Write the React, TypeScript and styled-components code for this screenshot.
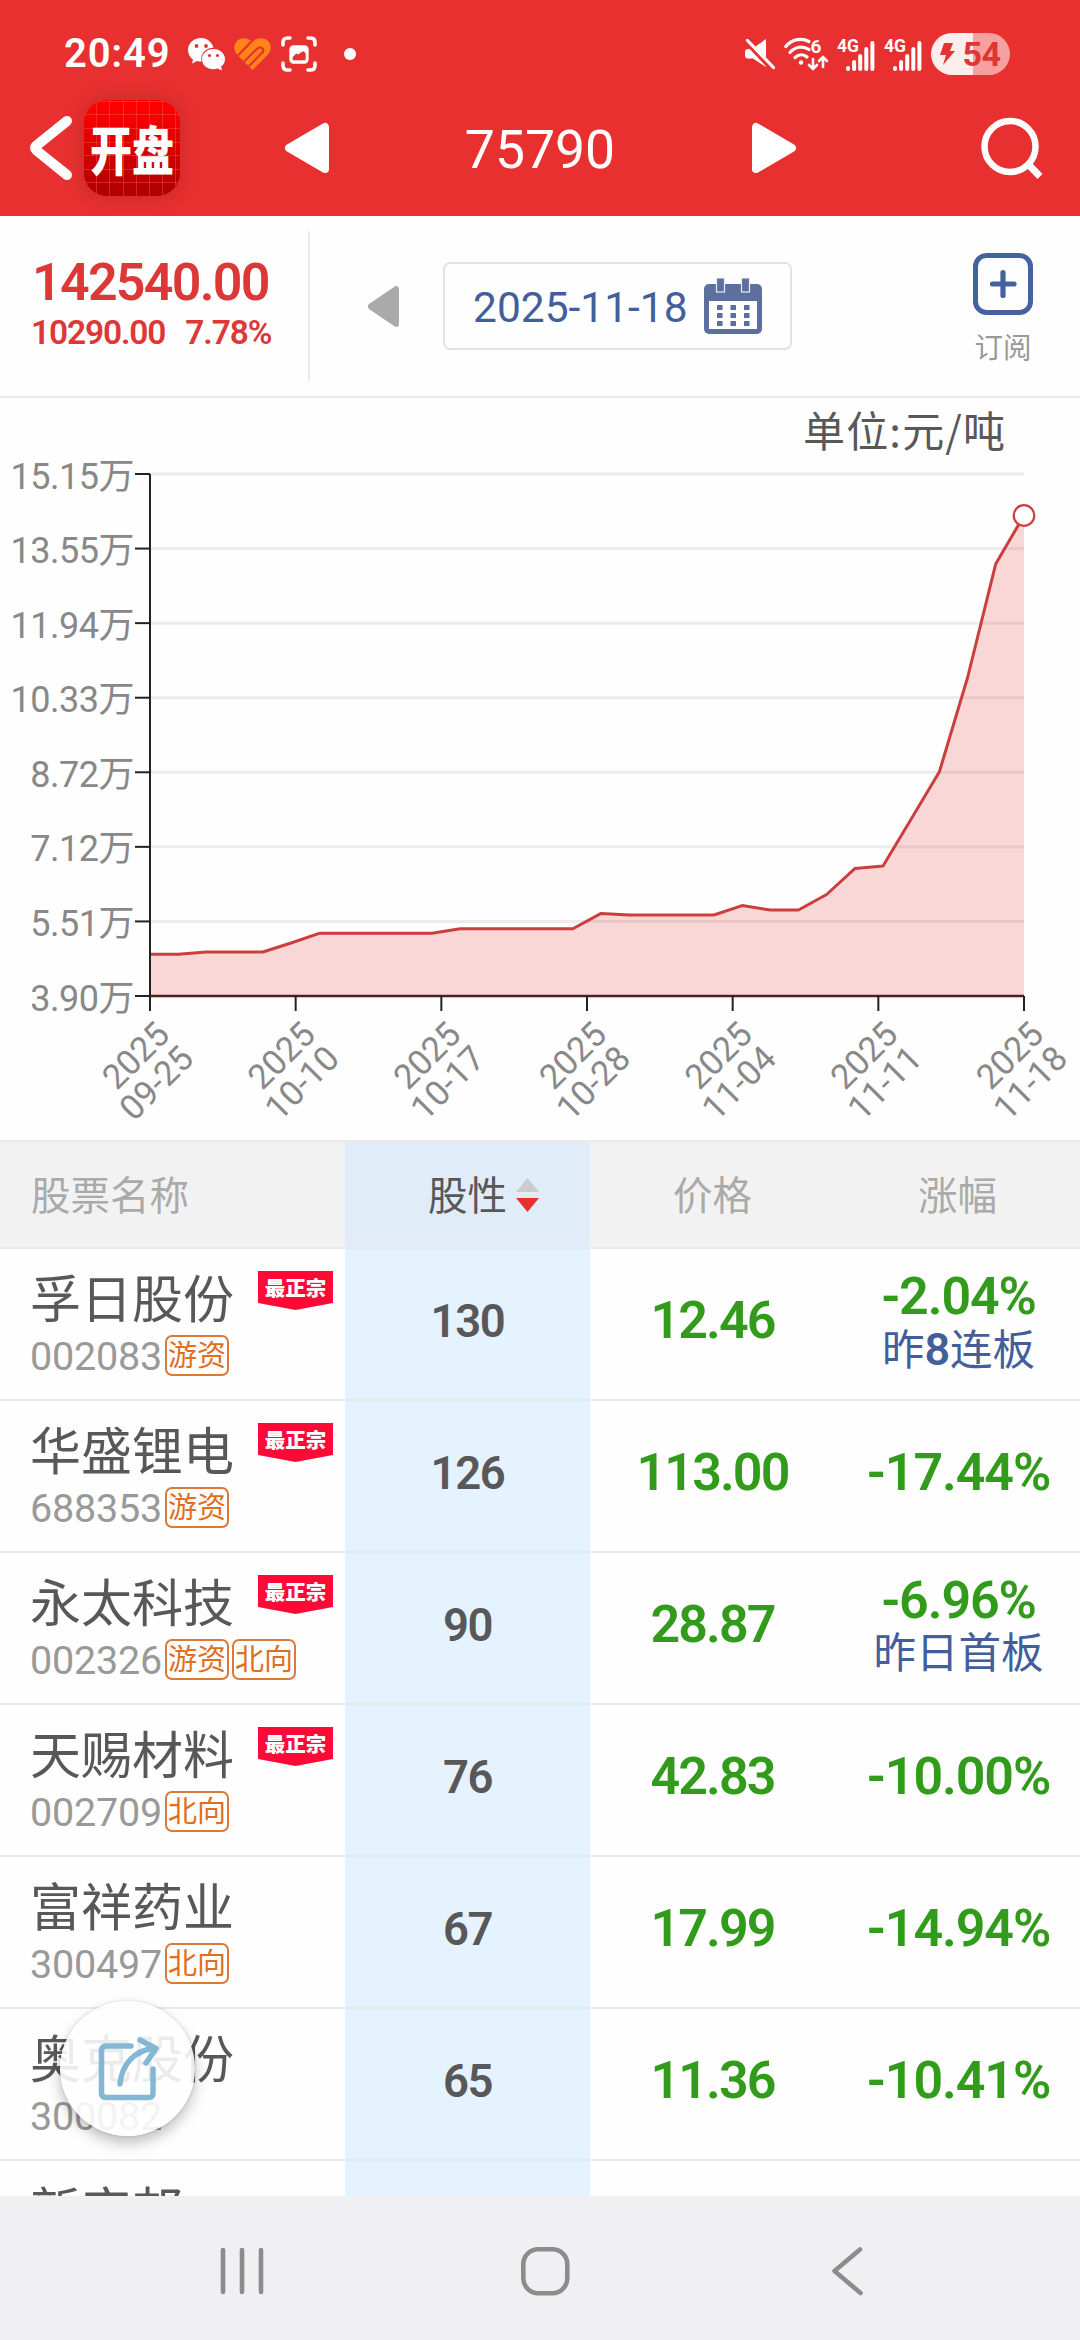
import React from "react";
import styled, { createGlobalStyle } from "styled-components";

const GlobalStyle = createGlobalStyle`
  * { box-sizing: border-box; }
  body {
    margin: 0;
    background: #fff;
    font-family: Roboto, "Noto Sans CJK SC", sans-serif;
  }
  svg { flex: none; overflow: visible; }
`;

const Screen = styled.div`
  position: relative;
  width: 1080px;
  height: 2340px;
  display: flex;
  flex-direction: column;
  overflow: hidden;
  background: #fefefe;
  color: #585858;
`;

const Header = styled.header`
  height: 216px;
  flex: none;
  background: #e83030;
  color: #fff;
`;

const StatusBar = styled.div`
  height: 96px;
  padding: 11px 70px 0 64px;
  display: flex;
  align-items: center;
  justify-content: space-between;
`;

const StatusGroup = styled.div<{ $gap: number }>`
  display: flex;
  align-items: center;
  gap: ${(p) => p.$gap}px;
`;

const Clock = styled.span`
  width: 107px;
  margin-right: 7px;
  font-size: 40px;
  font-weight: 600;
  line-height: 44px;
  letter-spacing: 0.8px;
`;

const Dot = styled.i`
  width: 12px;
  height: 12px;
  margin-left: 18px;
  border-radius: 50%;
  background: #fff;
`;

const Battery = styled.div`
  width: 79px;
  height: 42px;
  border-radius: 21px;
  display: flex;
  align-items: center;
  justify-content: center;
  gap: 7px;
  background: linear-gradient(90deg, #fdeeee 0 42px, #f6a09f 42px);
  color: #e03535;
  font-size: 34px;
  font-weight: 700;
  line-height: 42px;
  letter-spacing: -0.5px;
`;

const TitleBar = styled.div`
  height: 120px;
  padding: 0 36px 17px 28px;
  display: flex;
  align-items: center;
  justify-content: space-between;
`;

const TitleLeft = styled.div`
  width: 256px;
  display: flex;
  align-items: center;
  gap: 10px;
`;

const AppLogo = styled.div`
  width: 96px;
  height: 96px;
  border-radius: 23px;
  display: flex;
  align-items: center;
  justify-content: center;
  box-shadow: 0 0 12px 6px rgba(150, 30, 30, 0.22);
  background:
    repeating-linear-gradient(90deg, transparent 0 12.2px, rgba(255, 110, 110, 0.35) 12.2px 13.2px),
    repeating-linear-gradient(0deg, transparent 0 12.6px, rgba(255, 110, 110, 0.35) 12.6px 13.6px),
    linear-gradient(#ff0000 8%, #b40000 92%);
`;

const LogoText = styled.span`
  font-family: "Noto Sans CJK SC", sans-serif;
  font-weight: 900;
  font-size: 42px;
  line-height: 50px;
  transform: scaleY(1.26);
`;

const TitleNav = styled.div`
  display: flex;
  align-items: center;
  width: 511px;
  margin-left: -27px;
  justify-content: space-between;
`;

const Title = styled.h1`
  margin: 0;
  padding-top: 5px;
  font-size: 53.5px;
  font-weight: 400;
  line-height: 64px;
`;

const TitleRight = styled.div`
  width: 221px;
  display: flex;
  justify-content: flex-end;
`;

const Summary = styled.section`
  height: 182px;
  flex: none;
  display: flex;
  padding: 15px 0;
  border-bottom: 2px solid #eaeaea;
`;

const Quote = styled.div`
  width: 310px;
  height: 150px;
  padding: 23px 0 0 32px;
  border-right: 2px solid #eaeaea;
  color: #dc3838;
  font-weight: 600;
  white-space: nowrap;
`;

const QuotePrice = styled.div`
  font-size: 52px;
  line-height: 58px;
  letter-spacing: -1.75px;
`;

const QuoteChange = styled.div`
  display: flex;
  gap: 20px;
  margin-top: 1px;
  margin-left: -1px;
  font-size: 33.5px;
  line-height: 40px;
  letter-spacing: -1.15px;
`;

const DatePicker = styled.div`
  display: flex;
  align-items: center;
  flex: 1;
  padding-left: 58px;
  gap: 44px;
`;

const DateBox = styled.div`
  width: 349px;
  height: 88px;
  padding: 4px 27px 0 28px;
  border: 2px solid #e2e2e2;
  border-radius: 7px;
  display: flex;
  align-items: center;
  justify-content: space-between;
  color: #435f9b;
  font-size: 42.5px;
  line-height: 50px;
  svg { margin-top: -5px; }
`;

const Subscribe = styled.div`
  width: 154px;
  padding-top: 22px;
  display: flex;
  flex-direction: column;
  align-items: center;
  color: #999;
  font-size: 28.5px;
  line-height: 34px;
  gap: 17px;
`;

const ChartPanel = styled.section`
  height: 742px;
  flex: none;
  svg { display: block; }
`;

const axisFont = { fontFamily: 'Roboto, "Noto Sans CJK SC", sans-serif', fill: "#888" };

const cols = "345px 245px 245px 245px";

const TableHead = styled.div`
  height: 109px;
  flex: none;
  display: grid;
  grid-template-columns: ${cols};
  border-top: 2px solid #eaeaea;
  border-bottom: 2px solid #e8eaeb;
  background: #f2f2f2;
  color: #aaa;
  font-size: 39.5px;
  line-height: 50px;
`;

const HeadCell = styled.div<{ $active?: boolean; $left?: boolean }>`
  position: relative;
  display: flex;
  align-items: center;
  padding-top: 4px;
  padding-left: ${(p) => (p.$left ? 31 : 0)}px;
  justify-content: ${(p) => (p.$left ? "flex-start" : "center")};
  background: ${(p) => (p.$active ? "#e0ecf8" : "transparent")};
  color: ${(p) => (p.$active ? "#585858" : "inherit")};
`;

const SortMark = styled.svg`
  position: absolute;
  left: 171px;
  top: 36px;
`;

const TableBody = styled.div`
  flex: 1;
  min-height: 0;
  overflow: hidden;
`;

const Row = styled.div`
  height: 152px;
  display: grid;
  grid-template-columns: ${cols};
  border-bottom: 2px solid #e8eaeb;
`;

const StockCell = styled.div`
  position: relative;
  padding: 20px 0 0 30px;
`;

const StockName = styled.div`
  font-size: 51px;
  line-height: 64px;
  white-space: nowrap;
`;

const StockMeta = styled.div`
  height: 42px;
  margin-top: 1px;
  display: flex;
  align-items: center;
  gap: 3px;
`;

const Code = styled.span`
  width: 132px;
  padding-top: 3px;
  color: #999;
  font-size: 39.5px;
  line-height: 42px;
  letter-spacing: -0.2px;
`;

const Tag = styled.span`
  width: 64px;
  height: 41px;
  border: 2px solid #d97a38;
  border-radius: 7px;
  color: #df6f1e;
  font-size: 29px;
  line-height: 38px;
  text-align: center;
  white-space: nowrap;
`;

const Ribbon = styled.span`
  position: absolute;
  left: 258px;
  top: 22px;
  width: 75px;
  height: 39px;
  background: #ff0a37;
  clip-path: polygon(0 0, 100% 0, 100% 82%, 50% 100%, 0 82%);
  color: #fff;
  font-size: 20.5px;
  font-weight: 900;
  line-height: 37px;
  text-align: center;
`;

const Score = styled.div`
  display: flex;
  align-items: center;
  justify-content: center;
  padding-bottom: 6px;
  background: #e5f2ff;
  font-size: 45.5px;
  font-weight: 600;
  letter-spacing: -1.4px;
`;

const Value = styled.div<{ $tight?: boolean }>`
  display: flex;
  flex-direction: column;
  align-items: center;
  justify-content: center;
  padding-bottom: 6px;
  color: #329b1c;
  font-size: 52px;
  font-weight: 600;
  line-height: 58px;
  letter-spacing: ${(p) => (p.$tight ? -1.9 : -1.1)}px;
  padding-left: ${(p) => (p.$tight ? 0 : 2)}px;
  white-space: nowrap;
`;

const Streak = styled.div`
  color: #435f9b;
  font-size: 42.5px;
  font-weight: 400;
  line-height: 48px;
  letter-spacing: 0;
  b { font-weight: 600; font-size: 45px; }
`;

const ShareButton = styled.button`
  position: absolute;
  left: 60px;
  top: 2001px;
  width: 135px;
  height: 135px;
  padding: 0;
  border: 0;
  border-radius: 50%;
  background: rgba(254, 254, 254, 0.89);
  box-shadow: 0 7px 14px rgba(0, 0, 0, 0.25), 0 0 3px rgba(0, 0, 0, 0.16);
  display: flex;
  align-items: center;
  justify-content: center;
`;

const NavBar = styled.nav`
  height: 144px;
  flex: none;
  background: #f0f0f2;
  display: flex;
  justify-content: space-between;
  align-items: center;
  padding: 6px 217px 0 220px;
`;

const HomeKey = styled.svg`
  margin-left: -7px;
`;

const Triangle = ({ w, h, fill, flip }: { w: number; h: number; fill: string; flip?: boolean }) => (
  <svg width={w} height={h} viewBox="0 0 44 50" preserveAspectRatio="none">
    <path
      d="M4 25 L40 4 V46 Z"
      fill={fill}
      stroke={fill}
      strokeWidth="8"
      strokeLinejoin="round"
      transform={flip ? "matrix(-1 0 0 1 44 0)" : undefined}
    />
  </svg>
);

const WeChat = () => (
  <svg width="37" height="33" viewBox="0 0 37 33">
    <path fill="#fff" d="M13 1C5.800 1 0 6.200 0 13c0 4 2 7.300 5 9.500L4 26.500l5-2.500c1.500.5 3 .6 4.500.6C12 17 17 11 25.500 10.800 24 5 19 1 13 1Z" />
    <path fill="#fff" d="M25.500 12C19 12 14 16.500 14 22.200s5 10 11.500 10c1.500 0 2.800-.2 4-.6l4.500 2-1-4c2.500-1.800 4-4.400 4-7.400C37 16.500 32 12 25.500 12Z" />
    <g fill="#e83030">
      <circle cx="8.500" cy="9" r="1.900" /><circle cx="18" cy="9" r="1.900" />
      <circle cx="21.500" cy="18.500" r="1.600" /><circle cx="29.500" cy="18.500" r="1.600" />
    </g>
  </svg>
);

const Heart = () => (
  <svg width="37" height="32" viewBox="0 0 37 32">
    <defs>
      <clipPath id="heart"><path d="M18.500 32 3 16.500C-1 12-.5 6 3.500 2.500 8-1 14.500-.5 18.500 4 22.500-.5 29-1 33.500 2.500 37.500 6 38 12 34 16.500Z" /></clipPath>
    </defs>
    <g clipPath="url(#heart)">
      <path fill="#ff841a" d="M-1-2H38V34H-1Z" />
      <path d="M1 20.500 18.500 2.500M7 26.500 23 10.800Q26.500 8 28.500 10.500T27 16L12 31" fill="none" stroke="#e83030" strokeWidth="2.200" />
    </g>
  </svg>
);

const Capture = () => (
  <svg width="36" height="36" viewBox="0 0 36 36" fill="none" stroke="#fff" strokeWidth="3.600" strokeLinecap="round">
    <path d="M2 9V6.500Q2 2 6.500 2H9M27 2h2.500Q34 2 34 6.500V9M34 27v2.500Q34 34 29.500 34H27M9 34H6.500Q2 34 2 29.500V27" />
    <rect x="10" y="11" width="16" height="15" rx="2.500" strokeWidth="3.300" />
    <path d="M11 11h14v7l-3 1-2-3-3 3-2-1-4 4Z" fill="#fff" stroke="none" />
    <path d="m12 21 3.500-3.500 3 1.500 3.500-4 2.500 2v6.500H12Z" fill="#e83030" stroke="none" />
  </svg>
);

const Mute = () => (
  <svg width="31" height="32" viewBox="0 0 31 32">
    <path fill="#fff" d="M1 11h6l14-10v28L8 20.500H3Q0 20.500 0 17v-3q0-3 3-3Z" />
    <path d="M-1 2.500 27 32" stroke="#e83030" strokeWidth="3.500" />
    <path d="m2.500 2.500 26 27" stroke="#fff" strokeWidth="3.200" strokeLinecap="round" />
  </svg>
);

const Wifi = () => (
  <svg width="44" height="34" viewBox="0 0 44 34">
    <g fill="none" stroke="#fff" strokeWidth="3.200" strokeLinecap="round">
      <path d="M1.800 9.500C8 2 18 .500 25 4.500M6 15.500C11 9.500 19 8.500 25 12.500M11 20.500C14.500 17 19.500 16.800 23 20" />
      <path d="M29 22v9.500m-4-3.500 4 4 4-4M39 30v-9.500m-4 3.500 4-4 4 4" strokeWidth="2.600" />
    </g>
    <circle cx="17" cy="25.500" r="2.200" fill="#fff" />
    <text x="26.500" y="15.500" fill="#fff" fontSize="19" fontWeight="700">6</text>
  </svg>
);

const Signal = () => (
  <svg width="39" height="34" viewBox="0 0 39 34">
    <text x="0" y="14.500" fill="#fff" fontSize="18.500" fontWeight="700" textLength="22" lengthAdjust="spacingAndGlyphs">4G</text>
    {[5, 11, 17, 24, 30].map((h, i) => (
      <rect key={h} x={9 + i * 6.100} y={34 - h} width="4" height={h} rx="2" fill="#fff" />
    ))}
  </svg>
);

const CalendarIcon = () => (
  <svg width="59" height="56" viewBox="0 0 59 56">
    <rect y="6" width="58" height="50" rx="5" fill="#5d6f9f" />
    <rect x="5" y="23" width="48" height="28" fill="#fff" />
    {[12.5, 37.5].map((x) => (
      <rect key={x} x={x} y="0" width="8" height="14" fill="#5d6f9f" stroke="#e8eaf6" strokeWidth="1.200" />
    ))}
    {[13, 26.500, 40].map((x) => [27, 35, 43].map((y) => <rect key={`${x}-${y}`} x={x} y={y} width="5.500" height="5" fill="#5d6f9f" />))}
  </svg>
);

const priceY = [
  954.3, 954.3, 952, 952, 952, 943, 933.3, 933.3, 933.3, 933.3, 933.3, 928.8, 928.8, 928.8, 928.8, 928.8,
  913.4, 915, 915, 915, 915, 905.6, 910, 910, 894.5, 868.6, 865.9, 819, 771.7, 677.5, 563.7, 515.5,
];
const yLabels = ["15.15万", "13.55万", "11.94万", "10.33万", "8.72万", "7.12万", "5.51万", "3.90万"];
const xLabels = ["09-25", "10-10", "10-17", "10-28", "11-04", "11-11", "11-18"];

const LEFT = 150;
const RIGHT = 1024;
const TOP = 474;
const BOTTOM = 996;

const PriceChart = () => {
  const step = (RIGHT - LEFT) / (priceY.length - 1);
  const line = priceY.map((y, i) => `${(LEFT + i * step).toFixed(1)},${y}`).join(" ");
  return (
    <svg width="1080" height="742" viewBox="0 398 1080 742">
      <text x="1005" y="447" fontSize="42" textAnchor="end" fill="#585858" fontFamily='"Noto Sans CJK SC", sans-serif' textLength="202">
        单位:元/吨
      </text>
      {yLabels.map((label, i) => {
        const y = TOP + (i * (BOTTOM - TOP)) / 7;
        return (
          <g key={label}>
            {i < 7 && <path d={`M${LEFT} ${y}H${RIGHT}`} stroke="#ececec" strokeWidth="3" />}
            <path d={`M135 ${y}H${LEFT}`} stroke="#222" strokeWidth="2" />
            <text x="134" y={y + 14.5} fontSize="36" textAnchor="end" letterSpacing="-0.5" {...axisFont}>{label}</text>
          </g>
        );
      })}
      <polygon points={`${LEFT},${BOTTOM} ${line} ${RIGHT},${BOTTOM}`} fill="#e83030" fillOpacity="0.19" />
      <polyline points={line} fill="none" stroke="#cc3e3e" strokeWidth="3" strokeLinejoin="round" />
      <path d={`M${LEFT} ${TOP}V${BOTTOM}`} stroke="#222" strokeWidth="2" />
      <path d={`M${LEFT} ${BOTTOM}H${RIGHT}`} stroke="#4a2020" strokeWidth="2.500" />
      {xLabels.map((label, i) => {
        const x = LEFT + (i * (RIGHT - LEFT)) / 6;
        return (
          <g key={label}>
            <path d={`M${x} ${BOTTOM}v15`} stroke="#222" strokeWidth="2" />
            <g transform={`translate(${x + 21.5} 1036.5) rotate(-45)`} fontSize="34.500" textAnchor="end" {...axisFont}>
              <text>2025</text>
              <text y="34">{label}</text>
            </g>
          </g>
        );
      })}
      <circle cx={RIGHT} cy={priceY[priceY.length - 1]} r="10.300" fill="#fff" stroke="#cc3e3e" strokeWidth="2.200" />
    </svg>
  );
};

type Stock = {
  name: string;
  code: string;
  tags: string[];
  top?: boolean;
  score: string;
  price: string;
  change: string;
  streak?: React.ReactNode;
};

const stocks: Stock[] = [
  { name: "孚日股份", code: "002083", tags: ["游资"], top: true, score: "130", price: "12.46", change: "-2.04%", streak: <>昨<b>8</b>连板</> },
  { name: "华盛锂电", code: "688353", tags: ["游资"], top: true, score: "126", price: "113.00", change: "-17.44%" },
  { name: "永太科技", code: "002326", tags: ["游资", "北向"], top: true, score: "90", price: "28.87", change: "-6.96%", streak: "昨日首板" },
  { name: "天赐材料", code: "002709", tags: ["北向"], top: true, score: "76", price: "42.83", change: "-10.00%" },
  { name: "富祥药业", code: "300497", tags: ["北向"], score: "67", price: "17.99", change: "-14.94%" },
  { name: "奥克股份", code: "300082", tags: [], score: "65", price: "11.36", change: "-10.41%" },
  { name: "新宙邦", code: "", tags: [], score: "", price: "", change: "" },
];

export default function App() {
  return (
    <Screen>
      <GlobalStyle />
      <Header>
        <StatusBar>
          <StatusGroup $gap={9.5}>
            <Clock>20:49</Clock>
            <WeChat />
            <Heart />
            <Capture />
            <Dot />
          </StatusGroup>
          <StatusGroup $gap={8.2}>
            <Mute />
            <Wifi />
            <Signal />
            <Signal />
            <Battery>
              <svg width="15" height="22" viewBox="0 0 15 22"><path d="M4 0h9l-3 8h5L3 22l3-10H0Z" fill="#e03535" /></svg>
              54
            </Battery>
          </StatusGroup>
        </StatusBar>
        <TitleBar>
          <TitleLeft>
            <svg width="46" height="66" viewBox="0 0 46 66">
              <path d="M39 6 8.500 30.500q-3 2.500 0 5L39 60" fill="none" stroke="#fff" strokeWidth="10" strokeLinecap="round" strokeLinejoin="round" />
            </svg>
            <AppLogo><LogoText>开盘</LogoText></AppLogo>
          </TitleLeft>
          <TitleNav>
            <Triangle w={44} h={50} fill="#fff" />
            <Title>75790</Title>
            <Triangle w={44} h={50} fill="#fff" flip />
          </TitleNav>
          <TitleRight>
            <svg width="64" height="64" viewBox="0 0 64 64" fill="none" stroke="#fff">
              <circle cx="30" cy="30.500" r="25.500" strokeWidth="6.500" />
              <path d="m48 48 12 12.500" strokeWidth="7" />
            </svg>
          </TitleRight>
        </TitleBar>
      </Header>

      <Summary>
        <Quote>
          <QuotePrice>142540.00</QuotePrice>
          <QuoteChange>
            <span>10290.00</span>
            <span>7.78%</span>
          </QuoteChange>
        </Quote>
        <DatePicker>
          <Triangle w={31} h={41} fill="#aaa" />
          <DateBox>
            2025-11-18
            <CalendarIcon />
          </DateBox>
        </DatePicker>
        <Subscribe>
          <svg width="60" height="62" viewBox="0 0 60 62" fill="none" stroke="#44629d">
            <rect x="2.500" y="2.500" width="55" height="57" rx="11" strokeWidth="5" />
            <path d="M30 19.500v23M19.500 31h21.500" strokeWidth="5.200" strokeLinecap="round" />
          </svg>
          订阅
        </Subscribe>
      </Summary>

      <ChartPanel>
        <PriceChart />
      </ChartPanel>

      <TableHead>
        <HeadCell $left>股票名称</HeadCell>
        <HeadCell $active>
          股性
          <SortMark width="23" height="34" viewBox="0 0 23 34">
            <path d="M11.500 0 23 14H0Z" fill="#ccc" />
            <path d="M11.500 34 0 20h23Z" fill="#e83030" />
          </SortMark>
        </HeadCell>
        <HeadCell>价格</HeadCell>
        <HeadCell>涨幅</HeadCell>
      </TableHead>

      <TableBody>
        {stocks.map((s) => (
          <Row key={s.name}>
            <StockCell>
              <StockName>{s.name}</StockName>
              <StockMeta>
                <Code>{s.code}</Code>
                {s.tags.map((t) => <Tag key={t}>{t}</Tag>)}
              </StockMeta>
              {s.top && <Ribbon>最正宗</Ribbon>}
            </StockCell>
            <Score>{s.score}</Score>
            <Value $tight>{s.price}</Value>
            <Value>
              {s.change}
              {s.streak && <Streak>{s.streak}</Streak>}
            </Value>
          </Row>
        ))}
      </TableBody>

      <NavBar>
        <svg width="45" height="50" viewBox="0 0 45 50" stroke="#8c8c8c" strokeWidth="4.600" strokeLinecap="round">
          <path d="M3 4v42M22 4v42M41 4v42" />
        </svg>
        <HomeKey width="50" height="50" viewBox="0 0 50 50">
          <rect x="3.300" y="3.300" width="44" height="44" rx="15" fill="none" stroke="#8c8c8c" strokeWidth="4.600" />
        </HomeKey>
        <svg width="32" height="50" viewBox="0 0 32 50" fill="none" stroke="#8c8c8c" strokeWidth="4.600" strokeLinecap="round" strokeLinejoin="round">
          <path d="M29 3.500 3.500 25 29.500 47" />
        </svg>
      </NavBar>

      <ShareButton>
        <svg width="64" height="66" viewBox="0 0 64 66" fill="none" stroke="#82b8d6" strokeWidth="5.500" strokeLinecap="round" strokeLinejoin="round">
          <path d="M35 10H10Q5.500 10 5.500 14.500V57Q5.500 61.500 10 61.500H53Q57 61.500 57 57V33" />
          <path d="M24 48C26 28 38 15 58 12M44 4l16 8.500L50 27" />
        </svg>
      </ShareButton>
    </Screen>
  );
}
